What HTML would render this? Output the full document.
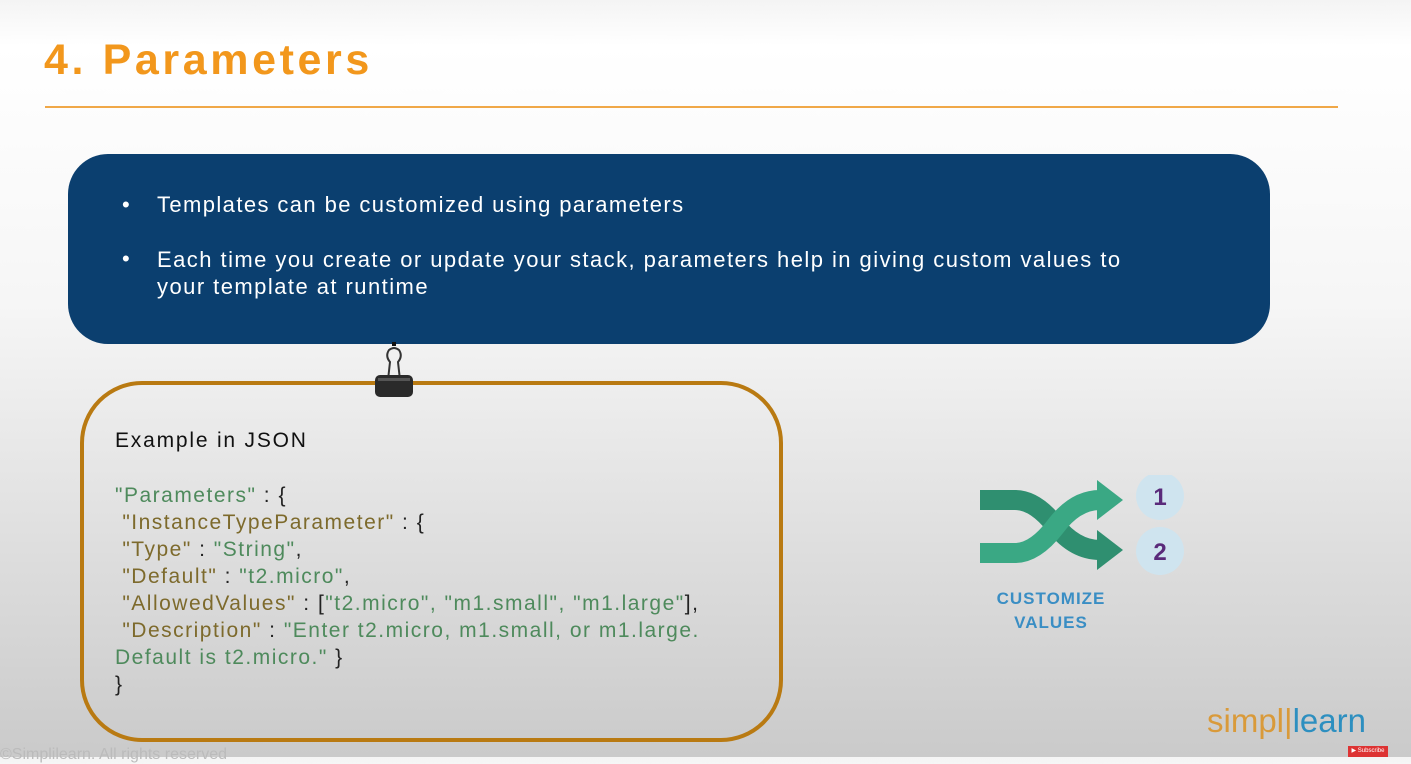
<!DOCTYPE html>
<html><head><style>
body{margin:0;width:1411px;height:757px;overflow:hidden;position:relative;font-family:"Liberation Sans",sans-serif;background:linear-gradient(#f4f4f4 0%,#fff 6%,#f6f6f6 40%,#dcdcdc 75%,#cacaca 100%);}
.a{position:absolute;white-space:nowrap}
.k{color:#7d6a2c}.v{color:#4e8a5c}.p{color:#222}
.code{font-size:21px;line-height:27px;letter-spacing:1.5px}
</style></head><body>
<div class="a" style="left:44px;top:36px;font-size:43px;font-weight:bold;color:#f2971c;letter-spacing:3.6px">4. Parameters</div>
<div class="a" style="left:45px;top:106px;width:1293px;height:2px;background:#f0a848"></div>
<div class="a" style="left:68px;top:154px;width:1202px;height:190px;background:#0b3f6f;border-radius:40px"></div>
<div class="a" style="left:122px;top:192px;color:#fff;font-size:22px">•</div>
<div class="a" style="left:157px;top:192px;color:#fff;font-size:22px;letter-spacing:1.4px">Templates can be customized using parameters</div>
<div class="a" style="left:122px;top:246px;color:#fff;font-size:22px">•</div>
<div class="a" style="left:157px;top:246px;color:#fff;font-size:22px;line-height:27px;letter-spacing:1.45px">Each time you create or update your stack, parameters help in giving custom values to<br>your template at runtime</div>
<div class="a" style="left:80px;top:381px;width:695px;height:353px;border:4px solid #b97a12;border-radius:62px"></div>
<svg class="a" style="left:372px;top:342px" width="44" height="58" viewBox="0 0 44 58">
<rect x="20" y="0" width="4" height="4" fill="#111"/>
<path d="M16 38 L18 20 Q13 14 17 8 Q22 4 27 8 Q31 14 26 20 L28 38" fill="none" stroke="#333" stroke-width="2"/>
<rect x="3" y="33" width="38" height="22" rx="5" fill="#2a2a2a"/>
<rect x="6" y="36" width="32" height="3" fill="#555"/>
</svg>
<div class="a" style="left:115px;top:429px;font-size:21px;color:#111;letter-spacing:1.8px">Example in JSON</div>
<div class="a code" style="left:115px;top:482px">
<span class="v">"Parameters"</span><span class="p"> : {</span><br>
<span class="k">&nbsp;"InstanceTypeParameter"</span><span class="p"> : {</span><br>
<span class="k">&nbsp;"Type"</span><span class="p"> : </span><span class="v">"String"</span><span class="p">,</span><br>
<span class="k">&nbsp;"Default"</span><span class="p"> : </span><span class="v">"t2.micro"</span><span class="p">,</span><br>
<span class="k">&nbsp;"AllowedValues"</span><span class="p"> : [</span><span class="v">"t2.micro", "m1.small", "m1.large"</span><span class="p">],</span><br>
<span class="k">&nbsp;"Description"</span><span class="p"> : </span><span class="v">"Enter t2.micro, m1.small, or m1.large.</span><br>
<span class="v">Default is t2.micro."</span><span class="p"> }</span><br>
<span class="p">}</span>
</div>
<svg class="a" style="left:975px;top:475px" width="215" height="105" viewBox="0 0 215 105">
<path d="M5 25 L40 25 Q60 25 80 50 Q100 75 125 75" fill="none" stroke="#2f8f70" stroke-width="20"/>
<path d="M5 78 L40 78 Q60 78 80 52 Q100 25 125 25" fill="none" stroke="#3aa884" stroke-width="20"/>
<polygon points="122,5 148,25 122,45" fill="#3aa884"/>
<polygon points="122,55 148,75 122,95" fill="#2f8f70"/>
<circle cx="185" cy="21" r="24" fill="#cfe4ef"/>
<circle cx="185" cy="76" r="24" fill="#cfe4ef"/>
<text x="185" y="30" text-anchor="middle" font-size="24" font-weight="bold" fill="#5a2a7a" font-family="Liberation Sans">1</text>
<text x="185" y="85" text-anchor="middle" font-size="24" font-weight="bold" fill="#5a2a7a" font-family="Liberation Sans">2</text>
</svg>
<div class="a" style="left:986px;top:587px;width:130px;text-align:center;color:#3a8ec4;font-size:17px;line-height:24px;font-weight:bold;letter-spacing:1px">CUSTOMIZE<br>VALUES</div>
<div class="a" style="left:1207px;top:702px;font-size:33px;letter-spacing:0"><span style="color:#d99a3a">simpl</span><span style="color:#d99a3a">|</span><span style="color:#2d8fc0">learn</span></div>
<div class="a" style="left:1348px;top:746px;width:40px;height:11px;background:#d33;color:#fff;font-size:6px;line-height:11px;text-align:center">▶ Subscribe</div>
<div class="a" style="left:0;top:746px;font-size:16px;color:#bbb">©Simplilearn. All rights reserved</div>
</body></html>
